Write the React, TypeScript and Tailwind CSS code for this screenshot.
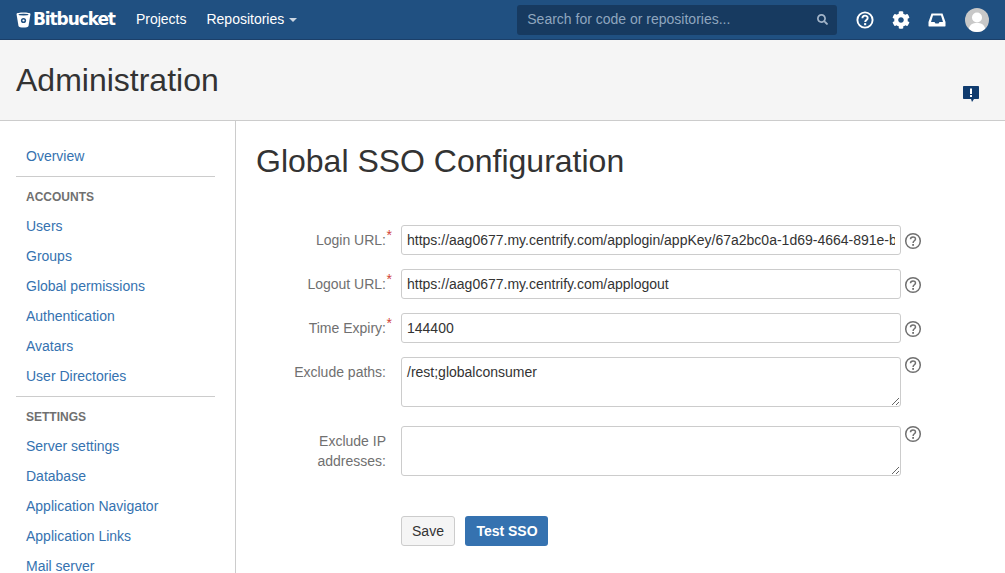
import { FaCog, FaSearch } from 'react-icons/fa';

const accountLinks = ['Users', 'Groups', 'Global permissions', 'Authentication', 'Avatars', 'User Directories'];
const settingLinks = ['Server settings', 'Database', 'Application Navigator', 'Application Links', 'Mail server'];

function SideLink({ label }: { label: string }) {
  return (
    <a href="#" className="block h-[30px] pl-[10px] text-[14px] leading-[30px] text-[#3572b0]">
      {label}
    </a>
  );
}

function SideHeading({ label }: { label: string }) {
  return (
    <div className="h-[34px] pl-[10px] text-[12px] font-bold leading-[40px] text-[#707070]">
      {label}
    </div>
  );
}

function HelpIcon() {
  return (
    <svg width="18" height="18" viewBox="0 0 18 18" className="shrink-0">
      <circle cx="9" cy="9" r="7.3" fill="none" stroke="#707070" strokeWidth="1.5" />
      <path d="M6.5 7.2 C6.5 4.2 11.5 4.2 11.5 7 C11.5 8.8 9.1 8.8 9.1 10.9" fill="none" stroke="#707070" strokeWidth="1.5" />
      <rect x="8.2" y="12" width="1.8" height="1.8" fill="#707070" />
    </svg>
  );
}

function FormRow({
  label,
  required,
  value,
}: {
  label: string;
  required?: boolean;
  value: string;
}) {
  return (
    <div className="mb-[14px] flex h-[30px] items-center">
      <label className="relative w-[129px] text-right text-[14px] text-[#707070]">
        {label}
        {required ? (
          <span className="absolute right-[-6px] top-[-5px] text-[14px] text-[#d04437]">*</span>
        ) : null}
      </label>
      <input
        readOnly
        value={value}
        className="ml-[15px] h-[30px] w-[500px] rounded-[3px] border border-[#cccccc] bg-white px-[5px] text-[14px] text-[#333333] outline-none"
      />
      <div className="ml-[3px] mt-[2px] flex w-[18px] items-center">
        <HelpIcon />
      </div>
    </div>
  );
}

function TextRow({ label, value, className }: { label: string; value: string; className: string }) {
  return (
    <div className={`flex items-start ${className}`}>
      <label className="w-[129px] pt-[5px] text-right text-[14px] leading-[20px] text-[#707070]">{label}</label>
      <textarea
        readOnly
        value={value}
        className="ml-[15px] h-[50px] w-[500px] rounded-[3px] border border-[#cccccc] bg-white px-[5px] py-[4px] text-[14px] leading-[20px] text-[#333333] outline-none"
      />
      <div className="ml-[3px] mt-[-1px] flex h-[18px] w-[18px] items-center">
        <HelpIcon />
      </div>
    </div>
  );
}

export default function App() {
  return (
    <div className="h-[573px] w-[1005px] overflow-hidden bg-white font-['Liberation_Sans',Arial,sans-serif] text-[14px]">
      <header className="flex h-[40px] items-center border-b border-[#1b3f69] bg-[#205081] text-white">
        <div className="ml-[16px] flex items-center">
          <svg width="15" height="16" viewBox="0 0 15 16" className="mr-[2px]">
            <path d="M0.5 2 C0.5 0 14.5 0 14.5 2 L12.5 14 C12 16 3 16 2.5 14 Z" fill="#fff" />
            <ellipse cx="7.5" cy="2.6" rx="5" ry="0.9" fill="#205081" />
            <circle cx="7.5" cy="8.5" r="2.6" fill="#205081" />
            <circle cx="7.5" cy="8.5" r="1.1" fill="#fff" />
          </svg>
          <span className="font-['DejaVu_Sans',sans-serif] text-[17px] font-bold tracking-[-1.1px]">Bitbucket</span>
        </div>
        <a className="ml-[21px] text-[14px]">Projects</a>
        <a className="ml-[20px] flex items-center text-[14px]">
          Repositories
          <span className="ml-[5px] mt-[1px] h-0 w-0 border-x-[4px] border-t-[4px] border-x-transparent border-t-[#ccd6e2]" />
        </a>
        <div className="ml-[220px] flex h-[30px] w-[320px] items-center justify-between rounded-[3px] bg-[#173a60] pl-[10px] pr-[9px] text-[14px] text-[#8fa6bf]">
          <span>Search for code or repositories...</span>
          <FaSearch size={11} className="text-[#a2b4c8]" />
        </div>
        <svg width="18" height="18" viewBox="0 0 18 18" className="ml-[19px]">
          <circle cx="9" cy="9" r="7.6" fill="none" stroke="#fff" strokeWidth="1.9" />
          <path d="M6.4 7.2 C6.4 3.8 11.7 3.8 11.7 7 C11.7 9 9.2 9 9.2 11" fill="none" stroke="#fff" strokeWidth="1.9" />
          <rect x="8.1" y="12.1" width="2.1" height="2.1" fill="#fff" />
        </svg>
        <FaCog size={18} className="ml-[18px]" />
        <svg width="18" height="14" viewBox="0 0 18 14" className="ml-[18px]">
          <path
            d="M3.5 0.5 H14.5 L17.5 9 V13 C17.5 13.3 17.3 13.5 17 13.5 H1 C.7 13.5 .5 13.3 .5 13 V9 Z M5 2.5 L3 9 H6.5 L7.5 10.5 H10.5 L11.5 9 H15 L13 2.5 Z"
            fill="#fff"
            fillRule="evenodd"
          />
        </svg>
        <div className="ml-[19px] h-[24px] w-[24px] overflow-hidden rounded-full bg-[#c8c8c8]">
          <svg width="24" height="24" viewBox="0 0 24 24">
            <circle cx="12" cy="9.5" r="5" fill="#fff" />
            <path d="M3.5 24 C3.5 16 8 15 12 15 C16 15 20.5 16 20.5 24 Z" fill="#fff" />
          </svg>
        </div>
      </header>

      <div className="flex h-[81px] items-start justify-between border-b border-[#cccccc] bg-[#f5f5f5] pl-[16px]">
        <h1 className="mt-[20px] text-[32px] leading-[40px] text-[#333333]">Administration</h1>
        <svg width="16" height="17" viewBox="0 0 16 17" className="mr-[26px] mt-[46px]">
          <path d="M1 0 H15 C15.6 0 16 .4 16 1 V12 C16 12.6 15.6 13 15 13 H11 L9 16 L8 13 H1 C.4 13 0 12.6 0 12 V1 C0 .4 .4 0 1 0 Z" fill="#0f3b6e" />
          <rect x="7" y="2.5" width="2" height="5.5" fill="#fff" />
          <rect x="7" y="9" width="2" height="2" fill="#fff" />
        </svg>
      </div>

      <div className="flex h-[452px]">
        <aside className="h-full w-[236px] shrink-0 overflow-hidden border-r border-[#cccccc] pl-[16px] pr-[20px] pt-[20px]">
          <SideLink label="Overview" />
          <div className="mt-[5px] border-t border-[#cccccc]" />
          <SideHeading label="ACCOUNTS" />
          {accountLinks.map((item) => (
            <SideLink key={item} label={item} />
          ))}
          <div className="mt-[5px] border-t border-[#cccccc]" />
          <SideHeading label="SETTINGS" />
          {settingLinks.map((item) => (
            <SideLink key={item} label={item} />
          ))}
        </aside>

        <main className="flex-1 pl-[20px]">
          <h2 className="mt-[20px] h-[84px] text-[32px] leading-[40px] text-[#333333]">Global SSO Configuration</h2>
          <div className="pl-[1px]">
            <FormRow
              label="Login URL:"
              required
              value="https://aag0677.my.centrify.com/applogin/appKey/67a2bc0a-1d69-4664-891e-b3a7f2c0d915/customerId/AAG0677"
            />
            <FormRow label="Logout URL:" required value="https://aag0677.my.centrify.com/applogout" />
            <FormRow label="Time Expiry:" required value="144400" />
            <TextRow label="Exclude paths:" value="/rest;globalconsumer" className="mb-[19px]" />
            <TextRow label="Exclude IP addresses:" value="" className="mb-[40px]" />
            <div className="ml-[144px] flex gap-[10px]">
              <button className="h-[30px] w-[54px] rounded-[3px] border border-[#cccccc] bg-[#f5f5f5] text-[14px] text-[#333333]">
                Save
              </button>
              <button className="h-[30px] w-[83px] rounded-[3px] bg-[#3572b0] pl-[1px] text-[14px] font-bold text-white">
                Test SSO
              </button>
            </div>
          </div>
        </main>
      </div>
    </div>
  );
}
